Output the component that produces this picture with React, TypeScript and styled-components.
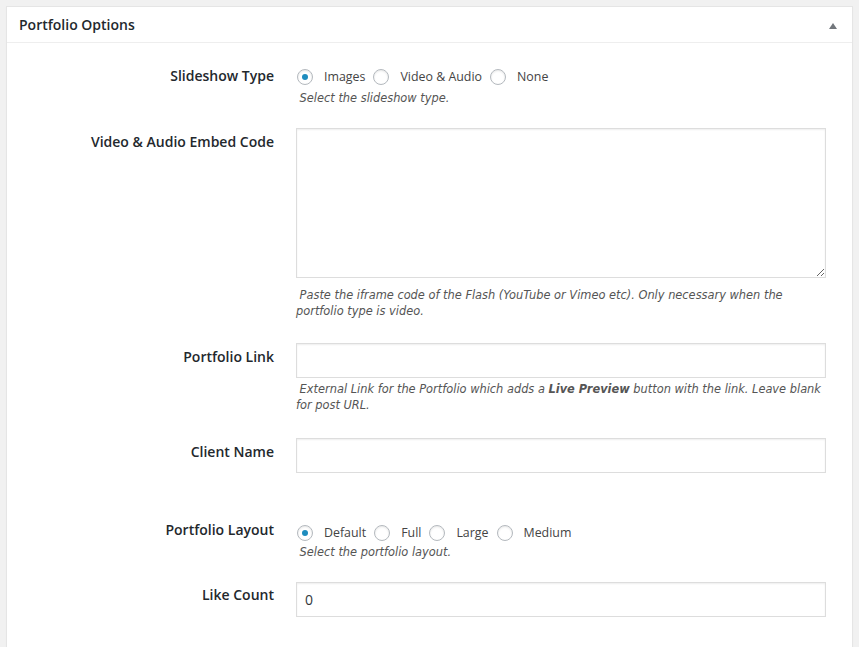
import React from "react";
import styled, { createGlobalStyle } from "styled-components";

const Global = createGlobalStyle`
  html, body { margin: 0; padding: 0; }
  body {
    background: #f1f1f1;
    font-family: "Open Sans", "Liberation Sans", sans-serif;
    color: #444;
  }
  * { box-sizing: border-box; }
`;

const Page = styled.div`
  padding: 6px 6px 0 6px;
  height: 647px;
  overflow: hidden;
`;

const Panel = styled.div`
  background: #fff;
  border: 1px solid #e5e5e5;
  box-shadow: 0 1px 1px rgba(0, 0, 0, 0.04);
  min-height: 700px;
`;

const Header = styled.div`
  display: flex;
  align-items: center;
  justify-content: space-between;
  height: 36px;
  padding: 0 12px;
  border-bottom: 1px solid #eee;
`;

const Title = styled.h2`
  margin: 0;
  font-size: 14px;
  font-weight: 600;
  color: #23282d;
  line-height: 20px;
`;

const Toggle = styled.span`
  width: 0;
  height: 0;
  border-left: 4px solid transparent;
  border-right: 4px solid transparent;
  border-bottom: 6px solid #72777c;
  margin-right: 3px;
  margin-top: 2px;
`;

const Body = styled.div`
  padding-top: 11px;
`;

const Row = styled.div<{ $gap?: number }>`
  display: grid;
  grid-template-columns: 267px 530px;
  column-gap: 22px;
  padding-top: ${(p) => p.$gap ?? 0}px;
`;

const Label = styled.div<{ $offset: number }>`
  text-align: right;
  font-size: 14px;
  font-weight: 600;
  color: #23282d;
  line-height: 20px;
  padding-top: ${(p) => p.$offset}px;
`;

const Field = styled.div`
  display: flex;
  flex-direction: column;
`;

const RadioGroup = styled.div<{ $top: number }>`
  display: flex;
  align-items: center;
  height: 20px;
  padding-left: 1px;
  margin-top: ${(p) => p.$top}px;
`;

const RadioCircle = styled.span<{ $checked?: boolean }>`
  width: 16px;
  height: 16px;
  border-radius: 50%;
  border: 1px solid #b4b9be;
  background: #fff;
  box-shadow: inset 0 1px 2px rgba(0, 0, 0, 0.1);
  display: inline-flex;
  align-items: center;
  justify-content: center;
  flex: none;
  &::after {
    content: "";
    width: 6px;
    height: 6px;
    border-radius: 50%;
    background: ${(p) => (p.$checked ? "#1e8cbe" : "transparent")};
  }
`;

const RadioText = styled.span`
  font-size: 12.4px;
  color: #444;
  margin: 0 8px 0 11px;
  line-height: 20px;
`;

const Desc = styled.p<{ $top: number }>`
  margin: ${(p) => p.$top}px 0 0 0;
  font-family: "DejaVu Sans", Verdana, sans-serif;
  font-style: italic;
  font-size: 11.4px;
  line-height: 16px;
  color: #555;
  b { font-weight: bold; }
`;

const TextArea = styled.textarea`
  width: 530px;
  height: 150px;
  border: 1px solid #ddd;
  box-shadow: inset 0 1px 2px rgba(0, 0, 0, 0.07);
  background: #fff;
  margin: 0;
  padding: 2px 6px;
  font-family: "Open Sans", sans-serif;
  font-size: 14px;
  display: block;
  outline: none;
`;

const Input = styled.input`
  width: 530px;
  height: 35px;
  border: 1px solid #ddd;
  box-shadow: inset 0 1px 2px rgba(0, 0, 0, 0.07);
  background: #fff;
  margin: 0;
  padding: 0 8px;
  font-family: "Open Sans", sans-serif;
  font-size: 14px;
  color: #32373c;
  display: block;
  outline: none;
`;

type Opt = { label: string; checked?: boolean };

const Radios: React.FC<{ options: Opt[]; top: number }> = ({ options, top }) => (
  <RadioGroup $top={top}>
    {options.map((o) => (
      <React.Fragment key={o.label}>
        <RadioCircle $checked={o.checked} />
        <RadioText>{o.label}</RadioText>
      </React.Fragment>
    ))}
  </RadioGroup>
);

export default function App() {
  return (
    <>
      <Global />
      <Page>
        <Panel>
          <Header>
            <Title>Portfolio Options</Title>
            <Toggle />
          </Header>
          <Body>
            <Row $gap={12}>
              <Label $offset={0}>Slideshow Type</Label>
              <Field>
                <Radios
                  top={1}
                  options={[
                    { label: "Images", checked: true },
                    { label: "Video & Audio" },
                    { label: "None" },
                  ]}
                />
                <Desc $top={3}>{"\u00a0Select the slideshow type."}</Desc>
              </Field>
            </Row>
            <Row $gap={22}>
              <Label $offset={4}>Video &amp; Audio Embed Code</Label>
              <Field>
                <TextArea />
                <Desc $top={9}>
                  {"\u00a0Paste the iframe code of the Flash (YouTube or Vimeo etc). Only necessary when the portfolio type is video."}
                </Desc>
              </Field>
            </Row>
            <Row $gap={24}>
              <Label $offset={4}>Portfolio Link</Label>
              <Field>
                <Input type="text" />
                <Desc $top={3}>
                  {"\u00a0External Link for the Portfolio which adds a "}
                  <b>Live Preview</b>
                  {" button with the link. Leave blank for post URL."}
                </Desc>
              </Field>
            </Row>
            <Row $gap={25}>
              <Label $offset={4}>Client Name</Label>
              <Field>
                <Input type="text" />
              </Field>
            </Row>
            <Row $gap={47}>
              <Label $offset={0}>Portfolio Layout</Label>
              <Field>
                <Radios
                  top={3}
                  options={[
                    { label: "Default", checked: true },
                    { label: "Full" },
                    { label: "Large" },
                    { label: "Medium" },
                  ]}
                />
                <Desc $top={1}>{"\u00a0Select the portfolio layout."}</Desc>
              </Field>
            </Row>
            <Row $gap={22}>
              <Label $offset={3}>Like Count</Label>
              <Field>
                <Input type="text" defaultValue="0" />
              </Field>
            </Row>
          </Body>
        </Panel>
      </Page>
    </>
  );
}
